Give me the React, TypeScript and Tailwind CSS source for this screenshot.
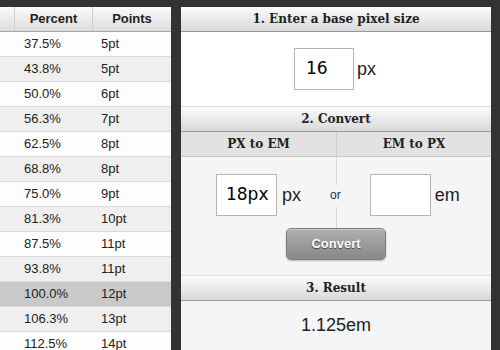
import React from 'react';

const rows = [
  ['37.5%', '5pt'],
  ['43.8%', '5pt'],
  ['50.0%', '6pt'],
  ['56.3%', '7pt'],
  ['62.5%', '8pt'],
  ['68.8%', '8pt'],
  ['75.0%', '9pt'],
  ['81.3%', '10pt'],
  ['87.5%', '11pt'],
  ['93.8%', '11pt'],
  ['100.0%', '12pt'],
  ['106.3%', '13pt'],
  ['112.5%', '14pt'],
];

const sans = "font-['Liberation_Sans',Arial,sans-serif]";
const serif = "font-['DejaVu_Serif',Georgia,serif]";

function SectionHeader({ title }: { title: string }) {
  return (
    <div
      className={`flex h-[25px] items-center justify-center border-b border-[#9a9a9a] bg-gradient-to-b from-[#fbfbfb] to-[#d9d9d9] text-[12px] font-bold text-[#222] ${serif}`}
    >
      {title}
    </div>
  );
}

export default function App() {
  return (
    <div className={`flex h-[350px] w-[500px] overflow-hidden bg-[#333] pt-[7px] ${sans}`}>
      {/* size table */}
      <div className="w-[171px] shrink-0 bg-white">
        <div className="flex h-[25px] border-b border-[#a5a5a5] bg-gradient-to-b from-[#fbfbfb] to-[#dcdcdc] text-[13px] font-bold text-[#222]">
          <div className="w-[15px] border-r border-[#cfcfcf]" />
          <div className="flex w-[78px] items-center justify-center border-r border-[#cfcfcf]">Percent</div>
          <div className="flex w-[78px] items-center justify-center">Points</div>
        </div>
        {rows.map(([pct, pt], i) => (
          <div
            key={pct}
            className={`flex h-[25px] items-center border-b border-[#dadada] text-[13px] text-[#222] ${
              i === 10 ? 'bg-[#c9c9c9]' : i % 2 === 0 ? 'bg-[#fdfdfd]' : 'bg-[#efefef]'
            }`}
          >
            <div className="w-[15px]" />
            <div className="w-[78px] pl-[9px]">{pct}</div>
            <div className="w-[78px] pl-[8px]">{pt}</div>
          </div>
        ))}
      </div>

      {/* converter */}
      <div className="ml-[10px] flex w-[310px] shrink-0 flex-col bg-[#f5f5f5]">
        <SectionHeader title="1. Enter a base pixel size" />
        <div className="flex h-[75px] items-center justify-center gap-[3px] border-b border-[#dedede] bg-white pr-[2px]">
          <div className="flex h-[42px] w-[60px] items-center border border-[#b5b5b5] bg-white pl-[11px] font-['DejaVu_Sans',Verdana,sans-serif] text-[17px] text-black">
            16
          </div>
          <span className="text-[18px] text-[#222]">px</span>
        </div>

        <SectionHeader title="2. Convert" />
        <div className={`flex h-[25px] border-b border-[#c9c9c9] bg-[#e2e2e2] text-[12px] font-bold text-[#222] ${serif}`}>
          <div className="flex w-[156px] items-center justify-center border-r border-[#cdcdcd]">PX to EM</div>
          <div className="flex flex-1 items-center justify-center">EM to PX</div>
        </div>
        <div className="relative h-[119px] border-b border-[#dcdcdc]">
          <div className="absolute left-[155px] top-0 h-[28px] w-px bg-[#d6d6d6]" />
          <div className="absolute left-[155px] top-[50px] h-[21px] w-px bg-[#d6d6d6]" />
          <div className="flex items-center pt-[17px]">
            <div className="flex w-[156px] items-center justify-end gap-[5px] pr-[36px]">
              <div className="flex h-[42px] w-[61px] items-center border border-[#b5b5b5] bg-white pl-[9px] font-['DejaVu_Sans',Verdana,sans-serif] text-[17px] text-black">
                18px
              </div>
              <span className="text-[18px] text-[#222]">px</span>
            </div>
            <div className="flex flex-1 items-center">
              <span className="ml-[-7px] text-[12px] text-[#1d2f45]">or</span>
              <div className="ml-[29px] h-[42px] w-[61px] border border-[#b5b5b5] bg-white" />
              <span className="ml-[4px] text-[18px] text-[#222]">em</span>
            </div>
          </div>
          <div className="mt-[12px] flex justify-center">
            <button className="h-[32px] w-[100px] rounded-[5px] border border-[#7c7c7c] bg-gradient-to-b from-[#b0b0b0] to-[#888] text-[13px] font-bold text-white shadow-[0_1px_2px_rgba(0,0,0,0.25),inset_0_1px_0_rgba(255,255,255,0.3)] [text-shadow:0_1px_1px_rgba(0,0,0,0.6)]">
              Convert
            </button>
          </div>
        </div>

        <SectionHeader title="3. Result" />
        <div className="flex h-[48px] items-center justify-center text-[18px] text-[#222]">1.125em</div>
      </div>
    </div>
  );
}
